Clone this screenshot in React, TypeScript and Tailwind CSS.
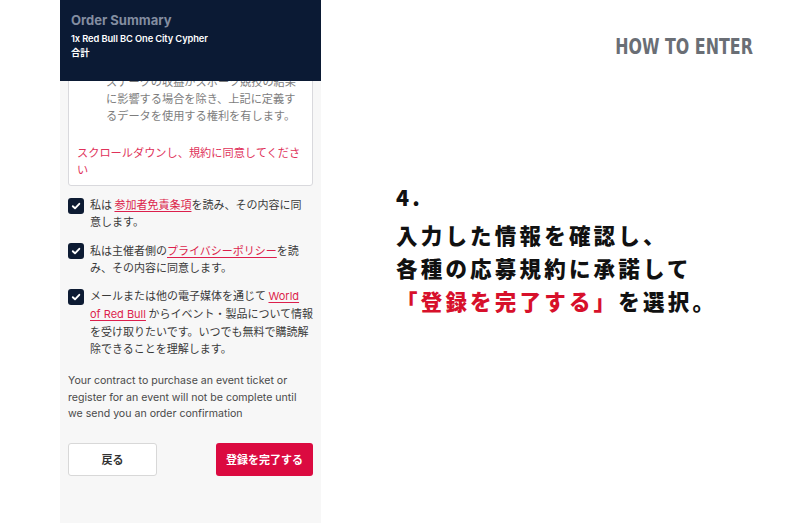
import React from "react";

const jp = { fontFamily: '"Noto Sans CJK JP", "Noto Sans", sans-serif' };
const mixed = { fontFamily: 'Inter, "Noto Sans CJK JP", sans-serif' };

function Check() {
  return (
    <div className="w-[16px] h-[16px] rounded-[3px] bg-[#0d1b33] flex items-center justify-center shrink-0 mt-[1.5px]">
      <svg width="10" height="10" viewBox="0 0 10 10">
        <path d="M1.8 5.2 L4 7.3 L8.3 2.8" stroke="white" strokeWidth="1.9" fill="none" strokeLinecap="round" strokeLinejoin="round" />
      </svg>
    </div>
  );
}

const Link = ({ children }: { children: React.ReactNode }) => (
  <span className="text-[#dc1f4c] underline underline-offset-2 decoration-[1px]">{children}</span>
);

export default function App() {
  return (
    <div className="w-[790px] h-[527px] bg-white flex overflow-hidden">
      <div className="w-[60px] shrink-0" />
      <div className="w-[261px] h-[523px] shrink-0 bg-[#f7f7f7] flex flex-col overflow-hidden">
        <div className="h-[81px] shrink-0 bg-[#0b1a34] px-[11px] pt-[11px] relative z-10" style={mixed}>
          <div className="text-[13px] font-bold text-[#838da0] leading-[18px]">Order Summary</div>
          <div className="text-[9.3px] font-semibold text-white leading-[14px] mt-[3px] tracking-[-0.1px]">1x Red Bull BC One City Cypher</div>
          <div className="text-[9.3px] font-semibold text-white leading-[13px]">合計</div>
        </div>
        <div className="px-[8px] flex flex-col" style={jp}>
          <div className="-mt-[18px] bg-white border border-[#d9d9dd] rounded-b-[3px] pt-[9px] pb-[7px]">
            <div className="pl-[37px] text-[11.2px] leading-[17px] text-[#7d7d7d] whitespace-nowrap">
              ステークの収益がスポーツ競技の結果<br />
              に影響する場合を除き、上記に定義す<br />
              るデータを使用する権利を有します。
            </div>
            <div className="mt-[20px] pl-[8px] text-[11.2px] leading-[17px] text-[#e0325a] whitespace-nowrap">
              スクロールダウンし、規約に同意してくださ<br />い
            </div>
          </div>
          <div className="mt-[10px] flex flex-col gap-[11.5px] text-[11px] leading-[17px] text-[#3a3a3a]">
            <div className="flex gap-[6px]">
              <Check />
              <div className="whitespace-nowrap">
                私は <Link>参加者免責条項</Link>を読み、その内容に同<br />意します。
              </div>
            </div>
            <div className="flex gap-[6px]">
              <Check />
              <div className="whitespace-nowrap">
                私は主催者側の<Link>プライバシーポリシー</Link>を読<br />み、その内容に同意します。
              </div>
            </div>
            <div className="flex gap-[6px]">
              <Check />
              <div className="whitespace-nowrap">
                メールまたは他の電子媒体を通じて <Link><span style={mixed}>World</span></Link><br />
                <Link><span style={mixed}>of Red Bull</span></Link> からイベント・製品について情報<br />
                を受け取りたいです。いつでも無料で購読解<br />
                除できることを理解します。
              </div>
            </div>
          </div>
          <div className="mt-[16px] text-[10.6px] leading-[16.5px] text-[#4a4a4a] whitespace-nowrap" style={{ fontFamily: 'Inter, "Noto Sans", sans-serif' }}>
            Your contract to purchase an event ticket or<br />
            register for an event will not be complete until<br />
            we send you an order confirmation
          </div>
          <div className="mt-[20px] flex justify-between">
            <div className="w-[89px] h-[33px] bg-white border border-[#d8d8d8] rounded-[3px] flex items-center justify-center text-[11px] font-bold text-[#333]">
              戻る
            </div>
            <div className="w-[97px] h-[33px] bg-[#db0a40] rounded-[3px] flex items-center justify-center text-[11px] font-bold text-white">
              登録を完了する
            </div>
          </div>
        </div>
      </div>
      <div className="flex-1 flex flex-col pt-[35px] pr-[37px]">
        <div className="self-end">
          <div
            className="inline-block text-[21px] font-bold text-[#6a6e75] leading-[24px] scale-x-[0.84] origin-right"
            style={{ fontFamily: '"DejaVu Sans Condensed", "DejaVu Sans", sans-serif' }}
          >
            HOW TO ENTER
          </div>
        </div>
        <div className="mt-[122px] pl-[75px] text-[21.5px] font-black text-[#111] tracking-[3.2px]" style={jp}>
          <div className="leading-[30px]">4.</div>
          <div className="mt-[6px] leading-[33px] whitespace-nowrap">入力した情報を確認し、</div>
          <div className="leading-[33px] whitespace-nowrap">各種の応募規約に承諾して</div>
          <div className="leading-[33px] whitespace-nowrap">
            <span className="text-[#d7102b]">「登録を完了する」</span>を選択。
          </div>
        </div>
      </div>
    </div>
  );
}
